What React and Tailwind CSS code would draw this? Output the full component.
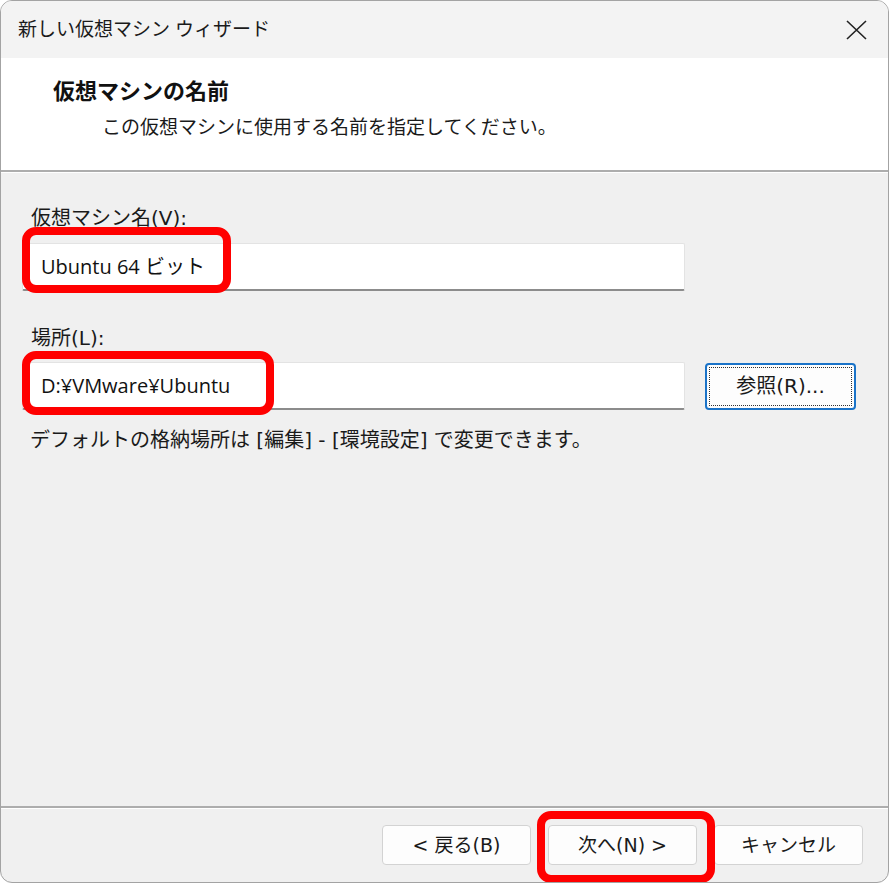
import React from "react";

const font = {
  fontFamily: '"Open Sans", "Noto Sans CJK JP", sans-serif',
};

// Meiryo-like label text: wide Latin, CJK from Noto
const labelFont = {
  fontFamily: '"DejaVu Sans", "Noto Sans CJK JP", sans-serif',
};

function Highlight({ className }) {
  return (
    <div
      className={`absolute border-[8px] border-[#ff0000] rounded-[14px] pointer-events-none ${className}`}
    />
  );
}

function Field({ value }) {
  return (
    <div className="w-[663px] h-[48px] bg-white border border-[#e3e3e3] border-b-2 border-b-[#8c8c8c] rounded-[2px] flex items-center pl-[18px] text-[20px] text-[#111]">
      {value}
    </div>
  );
}

function Button({ children, className = "" }) {
  return (
    <button
      style={labelFont}
      className={`h-[40px] bg-[#fdfdfd] border border-[#d3d3d3] rounded-[4px] text-[19px] text-[#1a1a1a] flex items-center justify-center ${className}`}
    >
      {children}
    </button>
  );
}

export default function App() {
  return (
    <div className="w-[891px] h-[885px] bg-white" style={font}>
      <div className="relative w-[889px] h-[883px] border border-[#a3a3a3] rounded-[12px] overflow-hidden flex flex-col bg-[#f0f0f0]">
        {/* title bar */}
        <div className="h-[57px] shrink-0 bg-[#f3f3f3] flex items-center justify-between pl-[17px] pr-[21px]">
          <span className="text-[19px] text-[#1a1a1a]">新しい仮想マシン ウィザード</span>
          <svg width="21" height="20" viewBox="0 0 21 20">
            <path d="M1 1 L20 19 M20 1 L1 19" stroke="#222" strokeWidth="1.6" fill="none" />
          </svg>
        </div>

        {/* header */}
        <div className="h-[114px] shrink-0 bg-white pt-[17px] border-b-2 border-[#adadad]">
          <div className="pl-[52px] text-[22px] font-bold text-[#111] leading-[30px]">
            仮想マシンの名前
          </div>
          <div className="pl-[101px] mt-[8px] text-[19px] text-[#1a1a1a] leading-[28px]">
            この仮想マシンに使用する名前を指定してください。
          </div>
        </div>

        {/* body */}
        <div className="flex-1 border-t border-white px-[21px] pt-[31px]" style={labelFont}>
          <div className="pl-[9px] text-[20px] text-[#1a1a1a] leading-[28px]">仮想マシン名(V):</div>
          <div className="mt-[11px]" style={font}>
            <Field value="Ubuntu 64 ビット" />
          </div>
          <div className="mt-[33px] pl-[9px] text-[20px] text-[#1a1a1a] leading-[28px]">場所(L):</div>
          <div className="mt-[10px] flex items-center gap-[20px]">
            <div style={font}>
              <Field value="D:¥VMware¥Ubuntu" />
            </div>
            <button className="w-[151px] h-[47px] rounded-[4px] border-2 border-[#1a73c8] bg-[#fdfdfd] p-[2px]">
              <span className="w-full h-full flex items-center justify-center border border-dotted border-[#333] text-[20px] text-[#1a1a1a]">
                参照(R)...
              </span>
            </button>
          </div>
          <div className="mt-[16px] pl-[8px] text-[20px] text-[#1a1a1a] leading-[28px]">
            デフォルトの格納場所は [編集] - [環境設定] で変更できます。
          </div>
        </div>

        {/* footer */}
        <div className="h-[76px] shrink-0 border-t-2 border-[#adadad]">
          <div className="h-full border-t border-white flex items-start justify-end gap-[17px] pt-[16px] pr-[25px]">
            <Button className="w-[149px]">&lt; 戻る(B)</Button>
            <Button className="w-[149px]">次へ(N) &gt;</Button>
            <Button className="w-[149px]">キャンセル</Button>
          </div>
        </div>

        <Highlight className="left-[21px] top-[226px] w-[209px] h-[66px]" />
        <Highlight className="left-[21px] top-[350px] w-[252px] h-[64px]" />
        <Highlight className="left-[536px] top-[810px] w-[178px] h-[72px]" />
      </div>
    </div>
  );
}
